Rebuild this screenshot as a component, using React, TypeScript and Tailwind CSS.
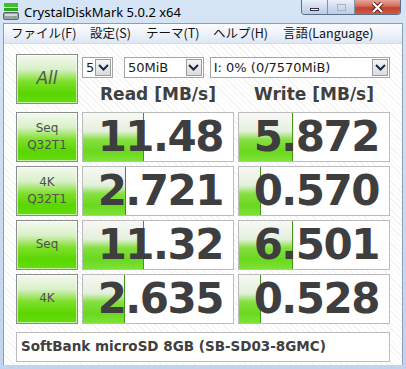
import React from 'react'

const numFont = { fontFamily: '"DejaVu Sans", Verdana, sans-serif' }

const rows = [
    { label: ['Seq', 'Q32T1'], read: '11.48', readFill: 61, write: '5.872', writeFill: 54 },
    { label: ['4K', 'Q32T1'], read: '2.721', readFill: 43, write: '0.570', writeFill: 22 },
    { label: ['Seq'], read: '11.32', readFill: 61, write: '6.501', writeFill: 54 },
    { label: ['4K'], read: '2.635', readFill: 42, write: '0.528', writeFill: 22 },
]

const menus = [
    { text: 'ファイル(F)', w: 'w-[79px]' },
    { text: '設定(S)', w: 'w-[56px]' },
    { text: 'テーマ(T)', w: 'w-[67px]' },
    { text: 'ヘルプ(H)', w: 'w-[70px]' },
    { text: '言語(Language)', w: 'w-[100px]' },
]

function Chevron() {
    return (
        <svg width="11" height="7" viewBox="0 0 11 7">
            <polyline points="1,1 5.5,5.5 10,1" fill="none" stroke="#15284f" strokeWidth="2" />
        </svg>
    )
}

function Select({ text, className }: { text: string; className: string }) {
    return (
        <div className={`flex h-[21px] items-stretch border border-[#a5a5a5] bg-white ${className}`}>
            <div className="flex flex-1 items-center pl-[3px] text-[13px] text-[#1a1a1a]" style={numFont}>
                {text}
            </div>
            <div className="m-px flex w-[16px] items-center justify-center border border-[#9a9a9a] bg-[linear-gradient(to_bottom,#f4f4f4,#dcdcdc)]">
                <Chevron />
            </div>
        </div>
    )
}

function Label({ lines, italic }: { lines: string[]; italic?: boolean }) {
    return (
        <div className="flex h-[50px] flex-col items-center justify-center border border-[#8c8c8c] bg-[linear-gradient(to_bottom,#f3f9ef_0%,#d9f0c8_30%,#7fe02c_55%,#5ad600_80%,#66dc10_100%)] shadow-[inset_0_0_0_1px_rgba(255,255,255,0.6)]">
            {lines.map((l) => (
                <span
                    key={l}
                    className={italic ? 'text-[17px] italic text-[#555555]' : 'text-[12px] leading-[17px] text-[#505050]'}
                    style={numFont}
                >
                    {l}
                </span>
            ))}
        </div>
    )
}

function Value({ value, fill }: { value: string; fill: number }) {
    return (
        <div className="relative flex h-[50px] items-center justify-end overflow-hidden border border-[#bcbcbc] bg-white pr-[10px]">
            <div
                className="absolute bottom-0 left-0 top-0 border-r border-[#3e9a14] bg-[linear-gradient(to_bottom,#f7f8f6_0%,#e4f0dc_38%,#86df40_56%,#6ad81e_80%,#7ee238_100%)]"
                style={{ width: fill }}
            />
            <span className="relative text-[42px] font-bold leading-none tracking-[-1.5px] text-[#3e3e3e]" style={numFont}>
                {value}
            </span>
        </div>
    )
}

export default function App() {
    return (
        <div className="flex h-[369px] w-[406px] flex-col bg-[linear-gradient(to_bottom,#d6e5f6,#bfd4ee)]">
            <div className="flex h-[23px] items-start">
                <svg width="16" height="17" viewBox="0 0 16 17" className="ml-[3px] mt-[3px]">
                    <rect x="1" y="0" width="14" height="4" fill="#3fbf2c" />
                    <rect x="1" y="5" width="14" height="3" fill="#2fa624" />
                    <rect x="0.5" y="9.5" width="15" height="7" rx="1.5" fill="#9aa2aa" stroke="#5c646c" />
                    <rect x="2" y="11" width="12" height="2" fill="#d4d8dc" />
                    <rect x="11" y="13.5" width="2" height="1.5" fill="#3fd040" />
                </svg>
                <span className="ml-[5px] mt-[3px] text-[13px] text-black" style={{ fontFamily: '"Noto Sans", sans-serif' }}>
                    CrystalDiskMark 5.0.2 x64
                </span>
                <div className="flex-1" />
                <div className="mr-[5px] flex h-[15px] overflow-hidden rounded-b-[4px] border border-t-0 border-[#5c6f89]">
                    <div className="flex w-[26px] items-end justify-center border-r border-[#8093ad] bg-[linear-gradient(to_bottom,#eaf1fa,#cfdcee_50%,#bccde6)] pb-[3px]">
                        <div className="h-[3px] w-[9px] border border-[#334] bg-white" />
                    </div>
                    <div className="flex w-[27px] items-center justify-center border-r border-[#8093ad] bg-[linear-gradient(to_bottom,#eaf1fa,#cfdcee_50%,#bccde6)]">
                        <div className="h-[7px] w-[9px] border border-[#a8b4c4]" />
                    </div>
                    <div className="flex w-[45px] items-center justify-center bg-[linear-gradient(to_bottom,#e6a596,#d06a58_45%,#c2412f_55%,#d35c45)]">
                        <svg width="13" height="11" viewBox="0 0 13 11">
                            <path d="M2 1 L11 10 M11 1 L2 10" stroke="#5a1b14" strokeWidth="4" />
                            <path d="M2 1 L11 10 M11 1 L2 10" stroke="#ffffff" strokeWidth="2.2" />
                        </svg>
                    </div>
                </div>
            </div>
            <div className="mx-[3px] flex flex-1 flex-col border border-[#8d9db3] border-b-0">
                <div
                    className="flex h-[20px] items-center border-b border-[#d4dce8] bg-[linear-gradient(to_bottom,#fbfcfe,#eef3fa_50%,#dde7f3)] pl-[7px] text-[12.5px] text-[#111111]"
                    style={{ fontFamily: '"Noto Sans CJK JP", sans-serif' }}
                >
                    {menus.map((m) => (
                        <span key={m.text} className={m.w}>
                            {m.text}
                        </span>
                    ))}
                </div>
                <div className="flex flex-1 flex-col bg-[repeating-linear-gradient(45deg,#ffffff_0px,#ffffff_3px,#f3f3f3_3px,#f3f3f3_4px)] pl-[12px] pt-[10px]">
                    <div className="grid grid-cols-[62px_152px_152px] gap-[4px]">
                        <Label lines={['All']} italic />
                        <div className="col-span-2 flex flex-col">
                            <div className="mt-[3px] flex">
                                <Select text="5" className="w-[31px]" />
                                <Select text="50MiB" className="ml-[11px] w-[80px]" />
                                <Select text="I: 0% (0/7570MiB)" className="ml-[6px] w-[181px]" />
                            </div>
                            <div className="mt-[4px] flex text-[17px] font-bold text-[#404040]" style={numFont}>
                                <span className="w-[152px] text-center">Read [MB/s]</span>
                                <span className="ml-[4px] w-[152px] text-center">Write [MB/s]</span>
                            </div>
                        </div>
                        {rows.map((r) => (
                            <React.Fragment key={r.read}>
                                <Label lines={r.label} />
                                <Value value={r.read} fill={r.readFill} />
                                <Value value={r.write} fill={r.writeFill} />
                            </React.Fragment>
                        ))}
                    </div>
                    <div className="mt-[8px] flex h-[30px] w-[374px] items-center border border-[#bcbcbc] bg-white pl-[4px]">
                        <span className="text-[13.5px] font-bold text-[#404040]" style={numFont}>
                            SoftBank microSD 8GB (SB-SD03-8GMC)
                        </span>
                    </div>
                </div>
            </div>
            <div className="h-[4px]" />
        </div>
    )
}
